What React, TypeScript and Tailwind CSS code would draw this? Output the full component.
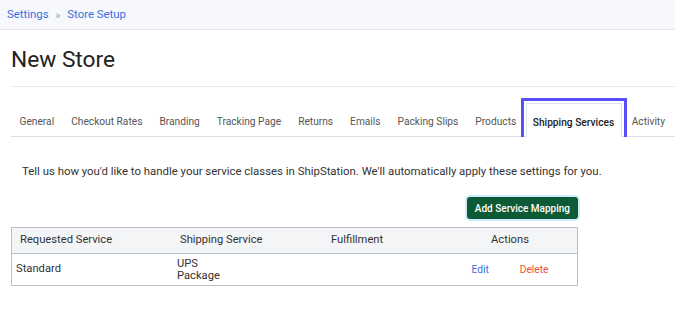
import React from "react";

const tabs = [
  "General",
  "Checkout Rates",
  "Branding",
  "Tracking Page",
  "Returns",
  "Emails",
  "Packing Slips",
  "Products",
  "Shipping Services",
  "Activity",
];

export default function App() {
  return (
    <div className="w-[675px] h-[334px] overflow-hidden bg-white font-['Roboto',sans-serif] text-[#333]">
      {/* Breadcrumb */}
      <div className="h-[30px] bg-[#f6f8fb] border-b border-[#e3e6ea] flex items-center px-[7px] pt-[1px] text-[11.4px] text-[#3b6fdc]">
        <span>Settings</span>
        <span className="mx-[7px] text-[10px] text-[#9aa3ad]">»</span>
        <span>Store Setup</span>
      </div>

      <div className="pl-[11px]">
        <h1 className="h-[57px] border-b border-[#e6e8eb] flex items-center pt-[4px] text-[22.7px] text-[#222] font-normal">
          New Store
        </h1>

        {/* Tabs */}
        <div className="mt-[11px] h-[39px] border-b border-[#dde1e6] flex items-end whitespace-nowrap">
          {tabs.map((t) =>
            t === "Shipping Services" ? (
              <div
                key={t}
                className="relative -mb-px -ml-[4px] -mr-[4px] h-[39px] px-[2px] pt-[2px] border-[3px] border-b-0 border-[#5a4ef6] flex"
              >
                <div className="flex-1 flex items-center pl-[6px] pr-[7px] pt-[5px] bg-white border border-b-0 border-[#dde1e6] text-[10.2px] font-medium text-[#222]">
                  {t}
                </div>
              </div>
            ) : (
              <div
                key={t}
                className="h-[36px] flex items-center px-[8.5px] pt-[7px] text-[10.2px] text-[#555]"
              >
                {t}
              </div>
            )
          )}
        </div>

        <p className="mt-[26px] ml-[11px] text-[11.4px] text-[#333]">
          Tell us how you'd like to handle your service classes in ShipStation. We'll automatically apply these settings for you.
        </p>

        <div className="w-[567px] mt-[17px] flex justify-end">
          <button className="h-[22px] px-[8px] rounded-[3px] bg-[#0d5b36] text-white text-[10px] font-medium ring-2 ring-[#cfeefb]">
            Add Service Mapping
          </button>
        </div>

        {/* Table */}
        <div className="mt-[8px] w-[567px] border border-[#b9c0c8] text-[11.2px]">
          <div className="h-[26px] bg-[#f4f5f7] border-b border-[#b9c0c8] grid grid-cols-[160px_151px_120px_1fr] items-center">
            <div className="pl-[8px]">Requested Service</div>
            <div className="pl-[8px]">Shipping Service</div>
            <div className="pl-[8px]">Fulfillment</div>
            <div className="text-center">Actions</div>
          </div>
          <div className="h-[31px] grid grid-cols-[160px_151px_120px_1fr] items-center">
            <div className="pl-[4px]">Standard</div>
            <div className="pl-[5px] leading-[12px]">
              <div>UPS</div>
              <div>Package</div>
            </div>
            <div></div>
            <div className="flex justify-center gap-[31px] text-[10.2px]">
              <span className="text-[#3b6fdc]">Edit</span>
              <span className="text-[#ef4b3c]">Delete</span>
            </div>
          </div>
        </div>
      </div>
    </div>
  );
}
